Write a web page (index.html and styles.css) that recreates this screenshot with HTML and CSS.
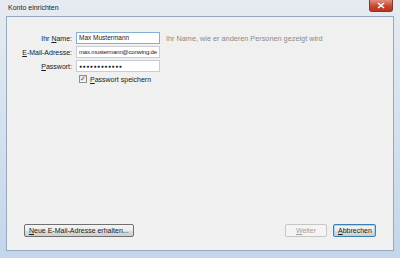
FILE: index.html
```html
<!DOCTYPE html>
<html lang="de">
<head>
  <meta charset="UTF-8" />
  <title>Konto einrichten</title>
  <link rel="stylesheet" href="styles.css">
</head>
<body>

  <div class="window">
    <div class="titlebar">
      <span class="title">Konto einrichten</span>
      <span class="close-btn">
        <svg width="8" height="7" viewBox="0 0 8 7"><path d="M1 1 L7 6 M7 1 L1 6" stroke="#fff" stroke-width="1.6"/></svg>
      </span>
    </div>

    <div class="client">
      <div class="form">
        <label class="lbl">Ihr <u>N</u>ame:</label>
        <div class="field focus">Max Mustermann</div>
        <span class="hint">Ihr Name, wie er anderen Personen gezeigt wird</span>

        <label class="lbl"><u>E</u>-Mail-Adresse:</label>
        <div class="field small">max.mustermann@conwing.de</div>
        <span></span>

        <label class="lbl"><u>P</u>asswort:</label>
        <div class="field pw">●●●●●●●●●●●●</div>
        <span></span>

        <span></span>
        <div class="check-row">
          <span class="checkbox">✓</span>
          <span><u>P</u>asswort speichern</span>
        </div>
        <span></span>
      </div>

      <div class="footer">
        <button class="btn"><u>N</u>eue E-Mail-Adresse erhalten...</button>
        <div class="right-buttons">
          <button class="btn disabled"><u>W</u>eiter</button>
          <button class="btn default"><u>A</u>bbrechen</button>
        </div>
      </div>
    </div>
  </div>

</body>
</html>
```

FILE: styles.css
```css
html, body {
  margin: 0;
  padding: 0;
  width: 400px;
  height: 258px;
  overflow: hidden;
  font-family: 'Liberation Sans', Arial, sans-serif;
  font-size: 7px;
  color: #1a1a1a;
}

.window {
  width: 400px;
  height: 258px;
  box-sizing: border-box;
  display: flex;
  flex-direction: column;
  padding: 0 6px 7px 6px;
  background: linear-gradient(to bottom, #e6ebf1 0%, #d7e3ef 40%, #c3d6ea 100%);
}

.titlebar {
  height: 16px;
  display: flex;
  align-items: flex-start;
  justify-content: space-between;
}

.title {
  margin-top: 4px;
  margin-left: 2px;
  font-size: 7px;
  color: #222;
}

.close-btn {
  width: 22px;
  height: 11px;
  margin-right: 1px;
  display: flex;
  align-items: center;
  justify-content: center;
  background: linear-gradient(to bottom, #e08f7e, #c6422c 60%, #b9351f);
  border: 1px solid #7e3a2f;
  border-top: none;
  border-radius: 0 0 3px 3px;
}

.client {
  flex: 1;
  background: #f0f0f0;
  border: 1px solid #97a9bd;
  display: flex;
  flex-direction: column;
  justify-content: space-between;
  padding: 15px 0 13px 0;
}

.form {
  display: grid;
  grid-template-columns: 65px 84px 1fr;
  column-gap: 4px;
  row-gap: 2px;
  align-items: center;
}

.lbl {
  text-align: right;
  white-space: nowrap;
}

.lbl u, .btn u, .check-row u {
  text-decoration: underline;
}

.field {
  height: 12px;
  box-sizing: border-box;
  background: #fff;
  border: 1px solid #c8cdd3;
  padding: 0 2px;
  line-height: 10px;
  font-size: 6.5px;
  white-space: nowrap;
  overflow: hidden;
}

.field.small {
  padding: 0 1px 0 2px;
  font-size: 6px;
  letter-spacing: -0.2px;
}

.field.focus {
  border-color: #86aed6;
}

.field.pw {
  font-size: 5px;
  letter-spacing: 0.6px;
  line-height: 10px;
}

.hint {
  margin-left: 2px;
  color: #8a8a8a;
  font-size: 7.3px;
  white-space: nowrap;
}

.check-row {
  display: flex;
  align-items: center;
  gap: 3px;
  margin-left: 3px;
  margin-top: 1px;
}

.checkbox {
  width: 8px;
  height: 8px;
  box-sizing: border-box;
  border: 1px solid #8f8f8f;
  background: linear-gradient(#e2e2e2, #f7f7f7);
  font-size: 7px;
  line-height: 6px;
  text-align: center;
  color: #4a5a7a;
}

.footer {
  display: flex;
  justify-content: space-between;
  align-items: center;
  padding: 0 17px 0 17px;
}

.right-buttons {
  display: flex;
  gap: 6px;
}

.btn {
  height: 13px;
  padding: 0 4px;
  font-family: inherit;
  font-size: 7px;
  color: #1a1a1a;
  border: 1px solid #707070;
  border-radius: 2px;
  background: linear-gradient(to bottom, #f4f4f4 0%, #ebebeb 50%, #dddddd 51%, #cfcfcf 100%);
  line-height: 11px;
}

.btn.disabled {
  width: 42px;
  color: #a0a0a0;
  border-color: #c6c6c6;
  background: #f4f4f4;
}

.btn.default {
  width: 43px;
  border-color: #3c7fb1;
  box-shadow: inset 0 0 0 1px #a8d6f0;
}
```
